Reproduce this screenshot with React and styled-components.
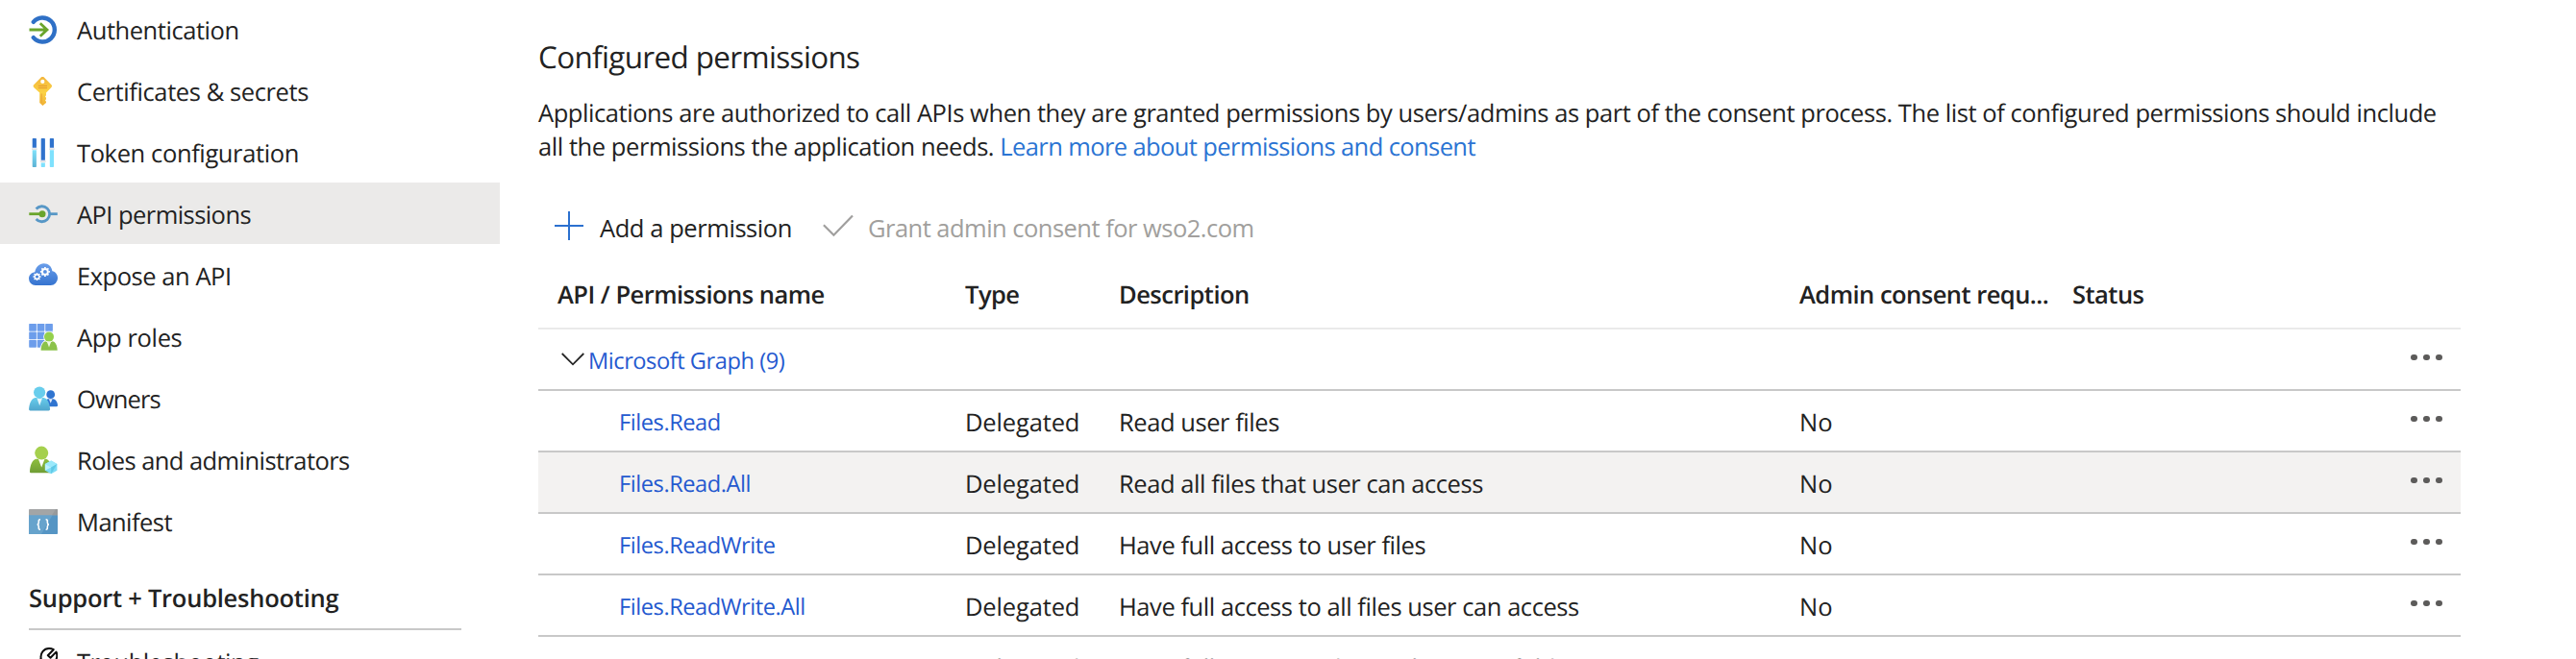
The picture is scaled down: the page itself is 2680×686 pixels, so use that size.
import React from "react";
import styled, { createGlobalStyle } from "styled-components";

const GlobalStyle = createGlobalStyle`
  * { box-sizing: border-box; }
  body {
    margin: 0;
    background: #fff;
    overflow: hidden;
  }
`;

const Page = styled.div`
  display: flex;
  height: 686px;
  overflow: hidden;
  color: #222;
  font-family: "Open Sans", "Noto Sans", sans-serif;
  font-size: 25.5px;
  line-height: 36px;
  text-rendering: geometricPrecision;
  white-space: nowrap;
`;

const Sidebar = styled.nav`
  flex: none;
  width: 520px;
  margin-top: -2px;
`;

const NavItem = styled.a`
  display: flex;
  align-items: center;
  gap: 20px;
  height: 64px;
  padding: 2px 0 0 30px;
  background: ${(p) => (p.$selected ? "#ebeae9" : "transparent")};

  svg {
    flex: none;
    width: 30px;
    height: 30px;
  }
`;

const Label = styled.span`
  padding-top: 2px;
  letter-spacing: ${(p) => p.$track ?? -0.44}px;
`;

const SectionTitle = styled.h3`
  display: flex;
  align-items: center;
  width: 450px;
  height: 82px;
  margin: 0 0 0 30px;
  padding-top: 18px;
  border-bottom: 2px solid #c8c8c8;
  font-size: inherit;
  font-weight: 600;
  letter-spacing: -0.25px;
`;

const Content = styled.main`
  flex: none;
  width: 2000px;
  margin-left: 40px;
  padding-top: 39px;
`;

const Heading = styled.h2`
  margin: 0 0 21px;
  font-size: 31.4px;
  font-weight: 400;
  line-height: 41px;
  letter-spacing: -0.62px;
`;

const Intro = styled.p`
  margin: 0;
  line-height: 35px;
  white-space: normal;
  letter-spacing: -0.435px;
`;

const LearnMore = styled.a`
  color: #2b74d3;
  letter-spacing: -0.6px;
`;

const Toolbar = styled.div`
  display: flex;
  align-items: center;
  gap: 32px;
  height: 70px;
  margin-top: 30px;
  padding-left: 17px;
`;

const Command = styled.button`
  display: flex;
  align-items: center;
  gap: ${(p) => p.$gap}px;
  padding: 0;
  border: 0;
  background: none;
  font: inherit;
  color: ${(p) => (p.disabled ? "#a19f9d" : "inherit")};

  svg {
    flex: none;
    margin-bottom: 2px;
  }
`;

const Row = styled.div`
  display: grid;
  grid-template-columns: 444px 160px 708px 284px 1fr;
  align-items: center;
  height: 64px;
  padding-top: 2px;
  border-bottom: 2px solid #c8c8c8;
  background: ${(p) => (p.$hovered ? "#f3f2f1" : "transparent")};
`;

const HeaderRow = styled(Row)`
  height: 72px;
  padding-top: 0;
  border-bottom-color: #eaeaea;
  font-weight: 600;
`;

const HeaderCell = styled.span`
  padding-top: 2px;
  padding-left: ${(p) => (p.$first ? 20 : 0)}px;
  letter-spacing: -0.52px;
`;

const GroupCell = styled.span`
  display: flex;
  align-items: center;
  gap: 3px;
  padding-left: 23px;

  svg {
    margin-bottom: 2px;
  }
`;

const NameLink = styled.a`
  padding-left: ${(p) => (p.$nested ? 84 : 0)}px;
  color: #2459cf;
  font-size: 23.6px;
  line-height: 34px;
  letter-spacing: -0.44px;
`;

const MoreButton = styled.span`
  grid-column: 5;
  justify-self: end;
  display: flex;
  gap: 6.2px;
  margin: 0 19px 6px 0;

  i {
    width: 6.8px;
    height: 6.8px;
    border-radius: 50%;
    background: #5c5b5a;
  }
`;

const AuthIcon = () => (
  <svg viewBox="0 0 30 30" fill="none">
    <path d="M4.8 6.9A12.5 12.5 0 1 1 4.8 23.1" stroke="#2f70c6" strokeWidth="4.4" strokeLinecap="round" />
    <path d="M.5 15H19M11.8 8.2 19 15l-7.2 6.8" stroke="#6aa52c" strokeWidth="2.8" />
  </svg>
);

const KeyIcon = () => (
  <svg viewBox="0 0 30 30">
    <defs>
      <linearGradient id="key" x1="0" y1="0" x2="0" y2="1">
        <stop offset="0" stopColor="#f3b63c" />
        <stop offset=".55" stopColor="#fbd244" />
        <stop offset="1" stopColor="#efaf35" />
      </linearGradient>
    </defs>
    <path
      fill="url(#key)"
      d="M12.3.9a2.8 2.8 0 0 1 4 0l6.9 7a2.4 2.4 0 0 1 0 3.4L18 16.6v2.6l-1 1.3 1 1.3v1.5l-1 1.2 1 1.3v1.2L14.4 30 11.2 27V16.6L5.4 11.3a2.4 2.4 0 0 1 0-3.4z"
    />
    <circle cx="14.3" cy="4.9" r="2.1" fill="#fff" />
    <path d="M9.8 9.4h9.2M9.8 11.6h9.2" stroke="#e59a2f" strokeWidth="1" />
    <path d="M13.2 17.5v9.3" stroke="#e8a33a" strokeWidth="1" />
  </svg>
);

const TokenIcon = () => (
  <svg viewBox="0 0 30 30">
    <defs>
      <linearGradient id="tok" x1="0" y1="0" x2="0" y2="1">
        <stop offset="0" stopColor="#7fe1fa" />
        <stop offset="1" stopColor="#5cb2d4" />
      </linearGradient>
    </defs>
    <path d="M3.7.7q0-.7.7-.7h2.8q.7 0 .7.7v9.1H3.7zM12.7.7q0-.7.7-.7h2.8q.7 0 .7.7v22.1h-4.2zM21.8.7q0-.7.7-.7h2.8q.7 0 .7.7v9.1h-4.2z" fill="#3073cd" />
    <path d="M3.7 12.3h4.2v17q0 .7-.7.7H4.4q-.7 0-.7-.7z" fill="url(#tok)" />
    <path d="M12.7 25.4h4.2v3.9q0 .7-.7.7h-2.8q-.7 0-.7-.7zM21.8 12.3H26v17q0 .7-.7.7h-2.8q-.7 0-.7-.7z" fill="#7fe1fd" />
    <path d="M3 10.2h5.6v1.7H3zM12 23.1h5.6v1.8H12zM21.1 10.2h5.6v1.7h-5.6z" fill="#e3e3e6" />
  </svg>
);

const ApiIcon = () => (
  <svg viewBox="0 0 30 30" fill="none">
    <path d="M7.6 9.5A8 8 0 1 1 7.6 20" stroke="#5797c6" strokeWidth="2.8" />
    <path d="M22 14.7h7.8" stroke="#5797c6" strokeWidth="2.8" />
    <path d="M.3 14.7H13" stroke="#6aa52c" strokeWidth="2.8" />
    <circle cx="14" cy="14.7" r="3.5" fill="#6aa52c" />
  </svg>
);

const Gear = ({ x, y, r }) => (
  <g transform={`translate(${x} ${y})`} fill="none" stroke="#fff">
    <circle r={r * 0.58} strokeWidth={r * 0.38} />
    {[0, 45, 90, 135].map((a) => (
      <path
        key={a}
        d={`M0 ${-r}V${-r * 0.68}M0 ${r}V${r * 0.68}`}
        strokeWidth={r * 0.34}
        transform={`rotate(${a})`}
      />
    ))}
  </g>
);

const CloudIcon = () => (
  <svg viewBox="0 0 30 30">
    <defs>
      <linearGradient id="cloud" x1="0" y1="0" x2="0" y2="1">
        <stop offset="0" stopColor="#6a9eea" />
        <stop offset="1" stopColor="#3674d0" />
      </linearGradient>
    </defs>
    <path fill="url(#cloud)" d="M6.8 24.9A6.9 6.9 0 0 1 0 18.1c0-3.7 2.8-6.5 6.3-6.8C7.3 6 11 2.3 15.6 2.3c4.8 0 8.1 3.2 8.8 8 3.3.5 5.6 3.5 5.6 7.1a7.4 7.4 0 0 1-7.3 7.5z" />
    <Gear x={8.5} y={16} r={4.1} />
    <Gear x={16.9} y={10.9} r={5} />
  </svg>
);

const AppRolesIcon = () => (
  <svg viewBox="0 0 30 30">
    <g fill="#6c9deb">
      {[0, 1, 2].map((r) =>
        [0, 1, 2].map((c) =>
          r === 2 && c === 2 ? null : (
            <rect key={`${r}${c}`} x={0.2 + c * 8.5} y={1 + r * 8.5} width="7.7" height="7.7" rx=".6" />
          )
        )
      )}
    </g>
    <path d="M12.6 28.7c0-5 2-9.3 5.4-9.5l3 .4 3.2-.4c3.4.2 5.5 4.5 5.5 9.5z" fill="#8bc24a" stroke="#fff" strokeWidth="1.8" paintOrder="stroke" />
    <circle cx="21" cy="14.6" r="5" fill="#94d04c" stroke="#fff" strokeWidth="1.6" paintOrder="stroke" />
    <path d="m18.8 19.8 2.2 5.7 2.2-5.7z" fill="#eef7e2" />
  </svg>
);

const OwnersIcon = () => (
  <svg viewBox="0 0 30 30">
    <defs>
      <linearGradient id="own" x1="0" y1="0" x2="0" y2="1">
        <stop offset="0" stopColor="#68cdec" />
        <stop offset="1" stopColor="#4fa5cc" />
      </linearGradient>
    </defs>
    <circle cx="22.7" cy="10.7" r="4.4" fill="#2f74d0" />
    <path d="M16 23.3c0-4 1.5-8 4-8h5.2c3 .4 4.8 3.7 4.8 6.8q0 1.2-1.2 1.2z" fill="#2f74d0" />
    <path d="m20.8 15.3 1.9 4.4 1.9-4.4z" fill="#dfeafa" />
    <path d="M1.4 27.4Q0 27.4.1 26C.4 20.4 2.8 14.5 6.6 14h9c3.8.5 6.2 6.4 6.5 12q0 1.4-1.4 1.4z" fill="url(#own)" />
    <circle cx="11.1" cy="8.5" r="6.1" fill="#68cdec" />
    <path d="m8.3 14.3 2.9 8 2.9-8q-2.9 1.4-5.8 0z" fill="#e4f5fb" />
  </svg>
);

const RolesIcon = () => (
  <svg viewBox="0 0 30 30">
    <defs>
      <linearGradient id="rol" x1="0" y1="0" x2="0" y2="1">
        <stop offset="0" stopColor="#8fbf3f" />
        <stop offset="1" stopColor="#6f9d35" />
      </linearGradient>
    </defs>
    <path d="M2.2 28.2Q.9 28.2 1 26.9C1.3 20.5 3.5 14.5 7.6 13.8h10.2c3.8.7 6.2 6.7 6.5 13.1l-1 1.3z" fill="url(#rol)" />
    <path d="m9.8 13.6 3.4 9 3.4-9z" fill="#fff" />
    <circle cx="13.2" cy="7.6" r="7" fill="#a5d04d" />
    <path d="m23.2 15.5 6.2 3.4v6.8l-6.2 3.5-6.3-3.5v-6.8z" fill="#7ddcf5" />
    <path d="m23.2 15.5 6.2 3.4-6.2 3.5-6.3-3.5z" fill="#9be9fb" />
    <path d="m29.4 18.9-6.2 3.5v6.8z" fill="#5fc8e6" />
    <path d="m16.9 18.9 6.3 3.5-6.3 3.3z" fill="#bdf2fd" />
  </svg>
);

const ManifestIcon = () => (
  <svg viewBox="0 0 30 30">
    <path d="M0 7.5h30v19.7q0 .8-.8.8H.8q-.8 0-.8-.8z" fill="#5595c4" />
    <path d="M0 7.5h25L13 28H.8q-.8 0-.8-.8z" fill="#67a3cc" />
    <path d="M.8 2h28.4q.8 0 .8.8v5.5H0V2.8Q0 2 .8 2z" fill="#a3a5a6" />
    <path d="M28 2h1.2q.8 0 .8.8v5.5h-6z" fill="#989a9b" />
    <path
      d="M12 12.8c-2 0-1.7 1.2-1.7 2.7s-.2 2.2-1.5 2.5c1.3.3 1.5 1 1.5 2.5s-.3 2.7 1.7 2.7M17.6 12.8c2 0 1.7 1.2 1.7 2.7s.2 2.2 1.5 2.5c-1.3.3-1.5 1-1.5 2.5s.3 2.7-1.7 2.7"
      fill="none"
      stroke="#fff"
      strokeWidth="1.6"
    />
  </svg>
);

const WrenchIcon = () => (
  <svg viewBox="0 0 30 30" fill="none" stroke="#0b0b0b" strokeWidth="2" strokeLinejoin="round">
    <path d="M12.7 11.5C11.6 5.6 15.8 1 21 1c1.7 0 3.3.4 4.7 1.2L19.8 8.3l2.7 2.5 6-6.2c2 4.6.2 10-4.7 11.7-1.6.6-3 .6-4.6.2L8.5 27.6a3.2 3.2 0 0 1-4.8-4.5z" />
  </svg>
);

const PlusIcon = () => (
  <svg width="30" height="30" viewBox="0 0 30 30" stroke="#2b70cf" strokeWidth="2">
    <path d="M15 0v30M0 15h30" />
  </svg>
);

const CheckIcon = () => (
  <svg width="32" height="24" viewBox="0 0 32 24" fill="none" stroke="#a09f9e" strokeWidth="2.2">
    <path d="M.9 11.2 11.4 21.8 31 1.5" />
  </svg>
);

const ChevronIcon = () => (
  <svg width="26" height="16" viewBox="0 0 26 16" fill="none" stroke="#262626" strokeWidth="1.8">
    <path d="m1.7 2 11.3 11.3L24.3 2" />
  </svg>
);

const More = () => (
  <MoreButton>
    <i />
    <i />
    <i />
  </MoreButton>
);

const navItems = [
  { label: "Authentication", Icon: AuthIcon },
  { label: "Certificates & secrets", Icon: KeyIcon, track: -0.4 },
  { label: "Token configuration", Icon: TokenIcon, track: -0.38 },
  { label: "API permissions", Icon: ApiIcon, track: -0.56, selected: true },
  { label: "Expose an API", Icon: CloudIcon, track: -0.46 },
  { label: "App roles", Icon: AppRolesIcon, track: -0.36 },
  { label: "Owners", Icon: OwnersIcon, track: -0.9 },
  { label: "Roles and administrators", Icon: RolesIcon, track: -0.57 },
  { label: "Manifest", Icon: ManifestIcon, track: -0.55 },
];

const permissions = [
  { name: "Files.Read", description: "Read user files" },
  { name: "Files.Read.All", description: "Read all files that user can access", hovered: true },
  { name: "Files.ReadWrite", description: "Have full access to user files" },
  { name: "Files.ReadWrite.All", description: "Have full access to all files user can access" },
  { name: "Files.ReadWrite.AppFolder", description: "Have full access to the application's folder (preview)" },
];

export default function App() {
  return (
    <Page>
      <GlobalStyle />
      <Sidebar>
        {navItems.map(({ label, Icon, track, selected }) => (
          <NavItem key={label} $selected={selected}>
            <Icon />
            <Label $track={track}>{label}</Label>
          </NavItem>
        ))}
        <SectionTitle>Support + Troubleshooting</SectionTitle>
        <NavItem>
          <WrenchIcon />
          <Label>Troubleshooting</Label>
        </NavItem>
      </Sidebar>
      <Content>
        <Heading>Configured permissions</Heading>
        <Intro>
          Applications are authorized to call APIs when they are granted permissions by users/admins as part of the
          consent process. The list of configured permissions should include all the permissions the application
          needs. <LearnMore>Learn more about permissions and consent</LearnMore>
        </Intro>
        <Toolbar>
          <Command $gap={17}>
            <PlusIcon />
            <Label $track={-0.43}>Add a permission</Label>
          </Command>
          <Command $gap={15} disabled>
            <CheckIcon />
            <Label $track={-0.52}>Grant admin consent for wso2.com</Label>
          </Command>
        </Toolbar>
        <HeaderRow>
          <HeaderCell $first>API / Permissions name</HeaderCell>
          <HeaderCell>Type</HeaderCell>
          <HeaderCell>Description</HeaderCell>
          <HeaderCell>Admin consent requ...</HeaderCell>
          <HeaderCell>Status</HeaderCell>
        </HeaderRow>
        <Row>
          <GroupCell>
            <ChevronIcon />
            <NameLink>Microsoft Graph (9)</NameLink>
          </GroupCell>
          <More />
        </Row>
        {permissions.map(({ name, description, hovered }) => (
          <Row key={name} $hovered={hovered}>
            <NameLink $nested>{name}</NameLink>
            <Label $track={-0.15}>Delegated</Label>
            <Label>{description}</Label>
            <Label $track={0}>No</Label>
            <More />
          </Row>
        ))}
      </Content>
    </Page>
  );
}
